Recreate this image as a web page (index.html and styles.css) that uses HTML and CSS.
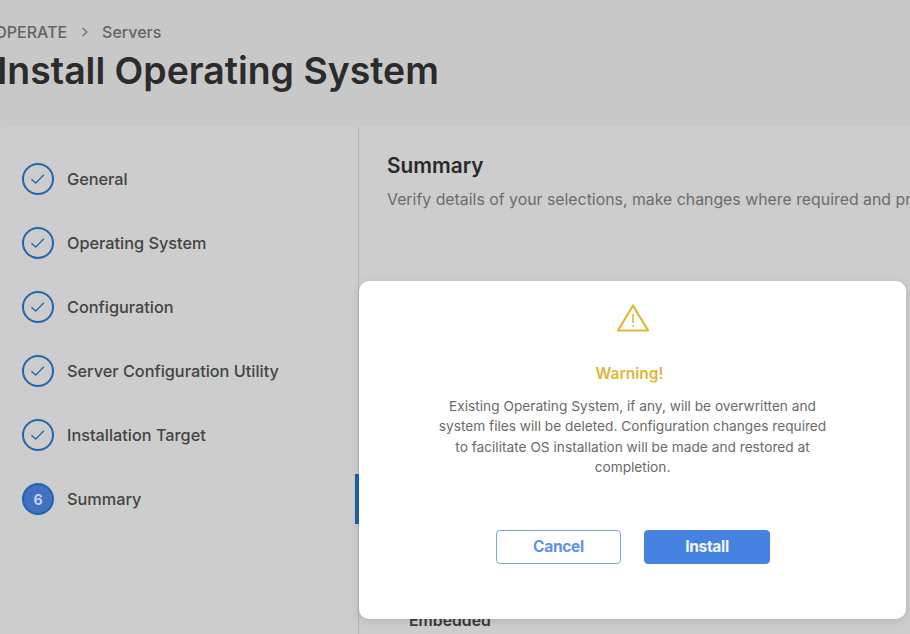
FILE: index.html
```html
<!DOCTYPE html>
<html lang="en">
<head>
<meta charset="utf-8">
<title>Install Operating System</title>
<link rel="stylesheet" href="styles.css">
</head>
<body>
<div class="page">
  <header class="head">
    <nav class="crumbs"><span>OPERATE</span>
      <svg class="sep" width="8" height="10" viewBox="0 0 8 10"><path d="M1.5 1l4.5 4-4.5 4" fill="none" stroke="#6f6f6f" stroke-width="1.2"/></svg>
      <span>Servers</span></nav>
    <h1>Install Operating System</h1>
  </header>
  <main class="card">
    <aside class="steps">
      <div class="step"><span class="circle"><svg width="16" height="12" viewBox="0 0 16 12"><path d="M1.5 6.2l4.3 3.8 8.2-8.4" fill="none" stroke="#1f66ad" stroke-width="1.3"/></svg></span><span>General</span></div>
      <div class="step"><span class="circle"><svg width="16" height="12" viewBox="0 0 16 12"><path d="M1.5 6.2l4.3 3.8 8.2-8.4" fill="none" stroke="#1f66ad" stroke-width="1.3"/></svg></span><span>Operating System</span></div>
      <div class="step"><span class="circle"><svg width="16" height="12" viewBox="0 0 16 12"><path d="M1.5 6.2l4.3 3.8 8.2-8.4" fill="none" stroke="#1f66ad" stroke-width="1.3"/></svg></span><span>Configuration</span></div>
      <div class="step"><span class="circle"><svg width="16" height="12" viewBox="0 0 16 12"><path d="M1.5 6.2l4.3 3.8 8.2-8.4" fill="none" stroke="#1f66ad" stroke-width="1.3"/></svg></span><span>Server Configuration Utility</span></div>
      <div class="step"><span class="circle"><svg width="16" height="12" viewBox="0 0 16 12"><path d="M1.5 6.2l4.3 3.8 8.2-8.4" fill="none" stroke="#1f66ad" stroke-width="1.3"/></svg></span><span>Installation Target</span></div>
      <div class="step current"><span class="circle active">6</span><span>Summary</span><i class="marker"></i></div>
    </aside>
    <section class="content">
      <h2>Summary</h2>
      <p class="lead">Verify details of your selections, make changes where required and proceed to install.</p>
      <div class="peek">Embedded</div>
    </section>
  </main>
</div>
<div class="modal" role="dialog">
  <svg class="warn" width="34" height="30" viewBox="0 0 34 30"><path d="M17 2.5L32 27.5H2z" fill="none" stroke="#e0b733" stroke-width="2.2" stroke-linejoin="round"/><path d="M17 11v9" stroke="#e0b733" stroke-width="1.6"/><circle cx="17" cy="23" r="1" fill="#e0b733"/></svg>
  <h3>Warning!</h3>
  <p>Existing Operating System, if any, will be overwritten and system files will be deleted. Configuration changes required to facilitate OS installation will be made and restored at completion.</p>
  <div class="actions">
    <button class="btn ghost">Cancel</button>
    <button class="btn solid">Install</button>
  </div>
</div>
</body>
</html>
```
FILE: styles.css
```css
* { box-sizing: border-box; }
html, body { margin: 0; height: 100%; }
body {
  width: 910px; height: 634px; overflow: hidden; position: relative;
  background: #c8c8c8; font-family: Inter, "Liberation Sans", sans-serif;
}
.page { width: 1100px; margin-left: -3px; }
.head { height: 130px; padding-top: 22px; margin-bottom: -3px; }
.crumbs {
  display: flex; align-items: center; gap: 13.5px; height: 20px;
  font-size: 16px; font-weight: 500; color: #636363; margin-left: -2.5px;
}
h1 {
  margin: 4px 0 0 0; font-size: 37.4px; line-height: 50px; font-weight: 600;
  color: #2b2b2b; letter-spacing: 0;
}
.card {
  display: flex; background: #cdcdcd; border-radius: 10px 0 0 0; height: 507px;
}
.steps {
  width: 362px; flex: none; border-right: 1px solid #b5b5b5; padding-top: 20px;
}
.step {
  position: relative; display: flex; align-items: center; gap: 13px; height: 64px;
  padding-left: 25px; font-size: 16.3px; font-weight: 500; color: #444;
}
.circle {
  width: 32px; height: 32px; border-radius: 50%; border: 2px solid #1f66ad;
  display: flex; align-items: center; justify-content: center; flex: none;
}
.circle.active {
  background: #4270c2; color: #c8d4ea; font-size: 14px; font-weight: 700;
}
.marker {
  position: absolute; right: -1px; top: 7px; width: 4px; height: 50px; background: #1f5fa6;
}
.content { flex: 1; padding: 27px 0 0 28px; position: relative; }
h2 { margin: 0; font-size: 20.8px; line-height: 24px; font-weight: 600; color: #2a2a2a; }
.lead { margin: 11px 0 0; font-size: 15.85px; line-height: 22px; color: #6c6c6c; white-space: nowrap; }
.peek { position: absolute; left: 50px; top: 484px; font-size: 15.8px; font-weight: 600; color: #3a3a3a; }
.modal {
  position: absolute; left: 359px; top: 281px; width: 547px; height: 338px;
  background: #fff; border-radius: 10px; box-shadow: 0 2px 8px rgba(0,0,0,.12);
  display: flex; flex-direction: column; align-items: center; padding-top: 22px;
}
.warn { display: block; }
h3 { margin: 29px 6px 0 0; font-size: 15.5px; line-height: 24px; font-weight: 600; color: #e0b733; }
.modal p {
  width: 392px; margin: 10px 0 0; text-align: center; font-size: 13.7px; line-height: 20.4px; color: #6a6a6a;
}
.actions { display: flex; gap: 23px; margin: 52px 0 0 1px; }
.btn {
  height: 34px; border-radius: 4px; font: 700 15.5px Inter, "Liberation Sans", sans-serif; letter-spacing: -0.3px;
}
.ghost { width: 125px; background: #fff; border: 1px solid #7ea6e6; color: #5f92e4; }
.solid { width: 126px; background: #4682e0; border: 1px solid #4682e0; color: #f1f5fc; }
```
